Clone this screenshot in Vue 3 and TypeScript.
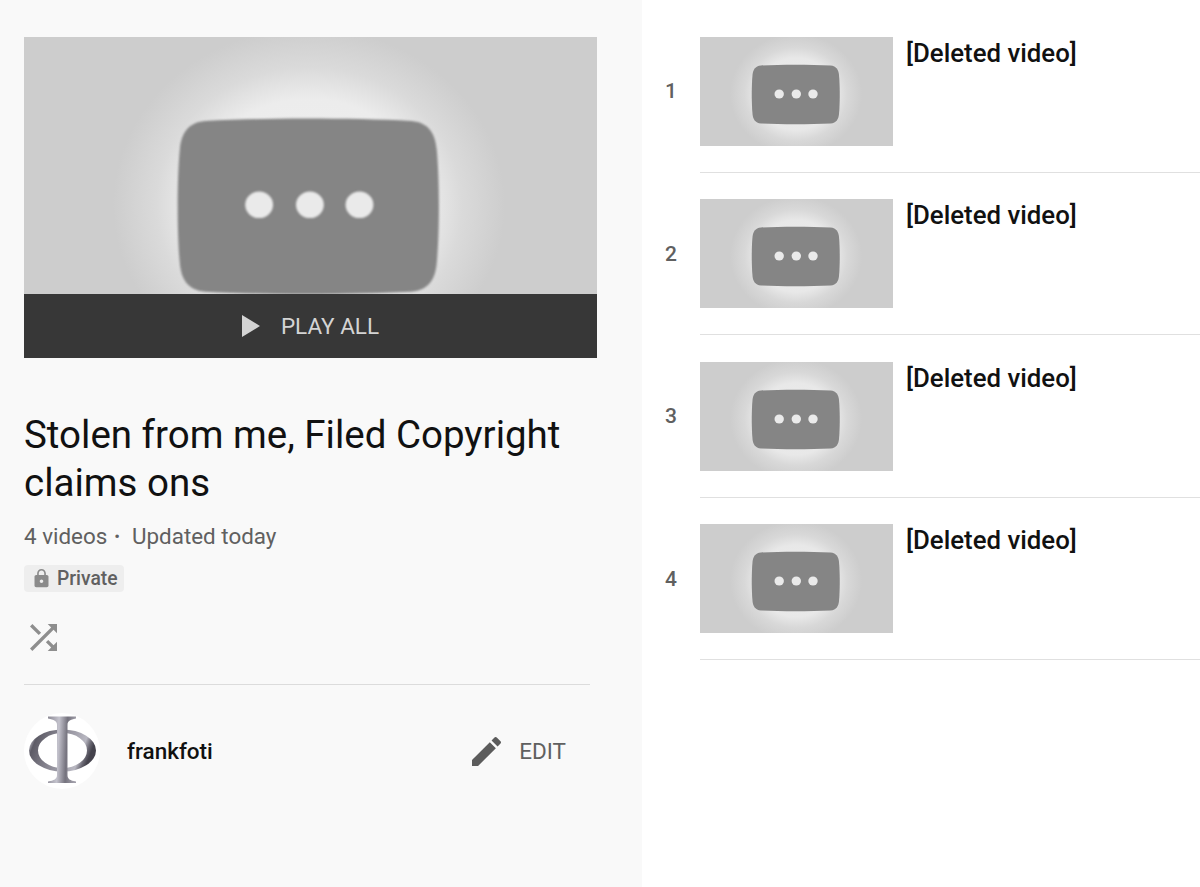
<script setup lang="ts">
const rows = [1, 2, 3, 4]
const glyphPath =
  'M61 28.5C80 27.4 110 27.4 130.5 28.5C136.5 29 138.5 33 139 38C140 48 140 67 139 77C138.5 82 136.5 86 130.5 86.5C110 87.6 80 87.6 61 86.5C55 86 53 82 52.5 77C51.5 67 51.5 48 52.5 38C53 33 55 29 61 28.5Z'
</script>

<template>
  <div class="page">
    <aside class="side">
      <div class="hero">
        <svg class="thumb-img" viewBox="0 0 193 109" preserveAspectRatio="none">
          <defs>
            <radialGradient id="glow-big" gradientUnits="userSpaceOnUse" cx="0" cy="0" r="1" gradientTransform="translate(96 57) scale(66 60)">
              <stop offset="0" stop-color="#f0f0f0" />
              <stop offset="0.6" stop-color="#ececec" />
              <stop offset="0.78" stop-color="#dadada" />
              <stop offset="1" stop-color="#cdcdcd" />
            </radialGradient>
          </defs>
          <rect width="193" height="109" fill="url(#glow-big)" />
          <path class="glyph soft" :d="glyphPath" />
          <ellipse class="dot soft" cx="79.2" cy="57" rx="4.7" ry="4.5" />
          <ellipse class="dot soft" cx="96.3" cy="57" rx="4.7" ry="4.5" />
          <ellipse class="dot soft" cx="113" cy="57" rx="4.7" ry="4.5" />
        </svg>
        <div class="play-bar">
          <svg class="play-icon" viewBox="0 0 18 22"><path d="M0 0L18 11L0 22Z" /></svg>
          <span>PLAY ALL</span>
        </div>
      </div>

      <h1 class="title">Stolen from me, Filed Copyright claims ons</h1>
      <div class="stats">
        <span>4 videos</span>
        <span class="sep">•</span>
        <span>Updated today</span>
      </div>
      <div class="badge">
        <svg class="lock" viewBox="0 0 24 24"><path d="M18 8h-1V6c0-2.76-2.24-5-5-5S7 3.24 7 6v2H6c-1.1 0-2 .9-2 2v10c0 1.1.9 2 2 2h12c1.1 0 2-.9 2-2V10c0-1.1-.9-2-2-2zm-6 9c-1.1 0-2-.9-2-2s.9-2 2-2 2 .9 2 2-.9 2-2 2zm3.1-9H8.9V6c0-1.71 1.39-3.1 3.1-3.1 1.71 0 3.1 1.39 3.1 3.1v2z" /></svg>
        <span>Private</span>
      </div>
      <svg class="shuffle" viewBox="4 4 16 16"><path d="M10.59 9.17L5.41 4 4 5.41l5.17 5.17 1.42-1.41zM14.5 4l2.04 2.04L4 18.59 5.41 20 17.96 7.46 20 9.5V4h-5.5zm.33 9.41l-1.41 1.41 3.13 3.13L14.5 20H20v-5.5l-2.04 2.04-3.13-3.13z" /></svg>
      <div class="rule"></div>
      <div class="owner">
        <div class="avatar">
          <svg viewBox="0 0 76 76">
            <defs>
              <linearGradient id="ring-steel" x1="0" y1="0" x2="1" y2="0.25">
                <stop offset="0" stop-color="#4f4d58" />
                <stop offset="0.07" stop-color="#c3c2cc" />
                <stop offset="0.15" stop-color="#5d5b66" />
                <stop offset="0.5" stop-color="#8d8b96" />
                <stop offset="0.86" stop-color="#b9b8c2" />
                <stop offset="0.94" stop-color="#6a6873" />
                <stop offset="1" stop-color="#45434d" />
              </linearGradient>
              <linearGradient id="bar-steel" x1="0" y1="0" x2="1" y2="0.1">
                <stop offset="0" stop-color="#8b8994" />
                <stop offset="0.4" stop-color="#c4c3cd" />
                <stop offset="0.7" stop-color="#75737e" />
                <stop offset="1" stop-color="#a09ea9" />
              </linearGradient>
            </defs>
            <path
              fill="url(#ring-steel)"
              fill-rule="evenodd"
              d="M5 37.5a33.5 21 0 1 0 67 0a33.5 21 0 1 0-67 0ZM14 37.5a24.5 17.5 0 1 0 49 0a24.5 17.5 0 1 0-49 0Z"
            />
            <path
              fill="url(#bar-steel)"
              d="M24 3.5H52V5.5C46 6.5 43.5 8 43.5 12V62C43.5 66 46 67.5 52 68.5V70H24V68.5C30 67.5 33 66 33 62V12C33 8 30 6.5 24 5.5Z"
            />
          </svg>
        </div>
        <span class="owner-name">frankfoti</span>
        <button class="edit">
          <svg class="pencil" viewBox="3 3 18 18"><path d="M3 17.25V21h3.75L17.81 9.94l-3.75-3.75L3 17.25zM20.71 7.04c.39-.39.39-1.02 0-1.41l-2.34-2.34c-.39-.39-1.02-.39-1.41 0l-1.83 1.83 3.75 3.75 1.83-1.83z" /></svg>
          <span>EDIT</span>
        </button>
      </div>
    </aside>

    <main class="list">
      <div v-for="n in rows" :key="n" class="row">
        <div class="index">{{ n }}</div>
        <div class="row-body">
          <svg class="thumb-small" viewBox="0 0 193 109">
            <defs>
              <radialGradient :id="`glow-${n}`" gradientUnits="userSpaceOnUse" cx="0" cy="0" r="1" gradientTransform="translate(96 57) scale(66 60)">
                <stop offset="0" stop-color="#eeeeee" />
                <stop offset="0.6" stop-color="#e8e8e8" />
                <stop offset="0.78" stop-color="#d8d8d8" />
                <stop offset="1" stop-color="#cdcdcd" />
              </radialGradient>
            </defs>
            <rect width="193" height="109" :fill="`url(#glow-${n})`" />
            <path class="glyph" :d="glyphPath" />
            <ellipse class="dot" cx="79.2" cy="57" rx="4.7" ry="4.5" />
            <ellipse class="dot" cx="96.3" cy="57" rx="4.7" ry="4.5" />
            <ellipse class="dot" cx="113" cy="57" rx="4.7" ry="4.5" />
          </svg>
          <div class="row-title">[Deleted video]</div>
        </div>
      </div>
    </main>
  </div>
</template>

<style>
html, body { margin: 0; background: #fff; }
</style>

<style scoped>
.page {
  display: flex;
  width: 1200px;
  height: 887px;
  overflow: hidden;
  font-family: Roboto, "Liberation Sans", sans-serif;
  background: #fff;
}

.side {
  box-sizing: border-box;
  width: 642px;
  height: 887px;
  padding: 37px 0 0 24px;
  background: #f9f9f9;
}

.hero {
  position: relative;
  width: 573px;
  height: 321px;
}

.thumb-img {
  display: block;
  width: 573px;
  height: 321px;
}

.glyph { fill: #858585; }
.dot { fill: #eaeaea; }
.soft { filter: blur(0.35px); }

.play-bar {
  position: absolute;
  left: 0;
  right: 0;
  bottom: 0;
  height: 64px;
  display: flex;
  align-items: center;
  justify-content: center;
  gap: 21px;
  background: #373737;
  color: #d4d4d4;
  font-size: 22.5px;
}

.play-icon {
  width: 18px;
  height: 22px;
  fill: #d4d4d4;
}

.title {
  width: 560px;
  margin: 53px 0 0;
  font-size: 38.5px;
  font-weight: 400;
  line-height: 48px;
  color: #111;
}

.stats {
  display: flex;
  margin-top: 14px;
  font-size: 22.4px;
  line-height: 30px;
  color: #606060;
}

.sep {
  margin: 0 12px 0 7px;
  font-size: 17px;
}

.badge {
  display: inline-flex;
  align-items: center;
  gap: 5px;
  box-sizing: border-box;
  height: 27px;
  margin-top: 14px;
  padding: 0 6px 0 7px;
  border-radius: 4px;
  background: #eeeeee;
  color: #606060;
  font-size: 19.3px;
  font-weight: 500;
}

.lock {
  width: 21px;
  height: 21px;
  fill: #8b8b8b;
}

.shuffle {
  display: block;
  width: 27px;
  height: 27px;
  margin: 31px 0 0 6px;
  fill: #8e8e8e;
}

.rule {
  width: 566px;
  height: 1px;
  margin-top: 33px;
  background: #dcdcdc;
}

.owner {
  display: flex;
  align-items: center;
  width: 542px;
  margin-top: 28px;
}

.avatar {
  width: 76px;
  height: 76px;
  border-radius: 50%;
  background: #fff;
}

.avatar svg {
  display: block;
  width: 76px;
  height: 76px;
}

.owner-name {
  margin-left: 27px;
  font-size: 22.5px;
  font-weight: 500;
  color: #111;
}

.edit {
  display: flex;
  align-items: center;
  gap: 18px;
  margin-left: auto;
  padding: 0;
  border: 0;
  background: none;
  font-family: inherit;
  font-size: 22.5px;
  color: #606060;
}

.pencil {
  width: 29px;
  height: 29px;
  fill: #5c5c5c;
}

.list {
  flex: 1;
  padding-top: 36.7px;
}

.row {
  display: flex;
  height: 162.6px;
}

.index {
  width: 58px;
  height: 109px;
  display: flex;
  align-items: center;
  justify-content: center;
  font-size: 21px;
  font-weight: 500;
  color: #606060;
}

.row-body {
  flex: 1;
  display: flex;
  gap: 13px;
  box-sizing: border-box;
  height: 136px;
  border-bottom: 1px solid #e0e0e0;
}

.thumb-small {
  display: block;
  width: 193px;
  height: 109px;
}

.row-title {
  font-size: 25.8px;
  font-weight: 500;
  line-height: 32px;
  color: #111;
}
</style>
